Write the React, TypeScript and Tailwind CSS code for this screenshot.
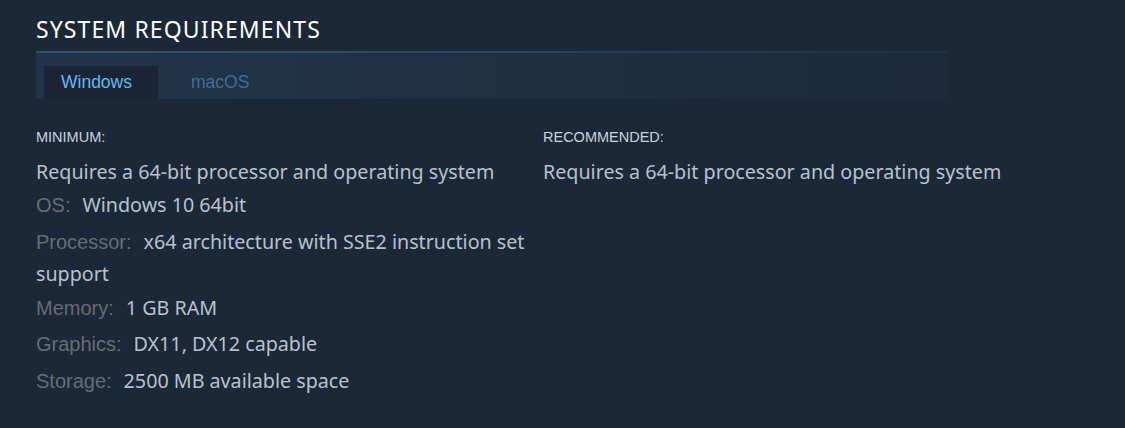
const minimum = [
  { label: "OS:", value: "Windows 10 64bit", gap: "mb-[5px]" },
  { label: "Processor:", value: "x64 architecture with SSE2 instruction set support", gap: "mb-[3px]" },
  { label: "Memory:", value: "1 GB RAM", gap: "mb-[4px]" },
  { label: "Graphics:", value: "DX11, DX12 capable", gap: "mb-[5px]" },
  { label: "Storage:", value: "2500 MB available space", gap: "" },
];

const App = () => {
  return (
    <div className="w-[1125px] h-[428px] bg-[#1b2838] px-9 pt-[14px] overflow-hidden">
      {/* Heading */}
      <h2 className="font-['Noto_Sans',sans-serif] text-[23px] leading-[30px] tracking-[1.1px] text-white">
        SYSTEM REQUIREMENTS
      </h2>

      {/* OS tabs */}
      <div className="mt-[7px] w-[912px]">
        <div className="h-[2px] bg-gradient-to-r from-[#2f5270] via-[#2a4660] to-[#1f3144]" />
        <div className="h-[46px] bg-gradient-to-r from-[#223449] via-[#1f3043] to-[#1c2a3b] flex items-end pl-2">
          <div className="h-[33px] pl-[17px] pr-[26px] bg-[#1a2434] flex items-center font-['Liberation_Sans',Arial,sans-serif] text-[17.5px] text-[#62baf2]">
            Windows
          </div>
          <div className="h-[33px] pl-[33px] pr-[17px] flex items-center font-['Liberation_Sans',Arial,sans-serif] text-[17.5px] text-[#3d7092]">
            macOS
          </div>
        </div>
      </div>

      {/* Columns */}
      <div className="flex mt-[28px]">
        <div className="w-[507px] pr-3">
          <div className="font-['Liberation_Sans',Arial,sans-serif] text-[14.5px] leading-[20px] text-[#c6d4df] mb-[9px]">
            MINIMUM:
          </div>
          <ul className="font-['Noto_Sans',sans-serif] text-[19.7px] leading-[31px] text-[#b8c2cc]">
            <li className="mb-[2px]">Requires a 64-bit processor and operating system</li>
            {minimum.map((row) => (
              <li key={row.label} className={row.gap}>
                <span className="font-['Liberation_Sans',Arial,sans-serif] text-[20px] text-[#676d73] mr-[12px]">
                  {row.label}
                </span>
                {row.value}
              </li>
            ))}
          </ul>
        </div>
        <div className="flex-1">
          <div className="font-['Liberation_Sans',Arial,sans-serif] text-[14.5px] leading-[20px] text-[#c6d4df] mb-[9px]">
            RECOMMENDED:
          </div>
          <ul className="font-['Noto_Sans',sans-serif] text-[19.7px] leading-[31px] text-[#b8c2cc]">
            <li>Requires a 64-bit processor and operating system</li>
          </ul>
        </div>
      </div>
    </div>
  );
};

export default App;
